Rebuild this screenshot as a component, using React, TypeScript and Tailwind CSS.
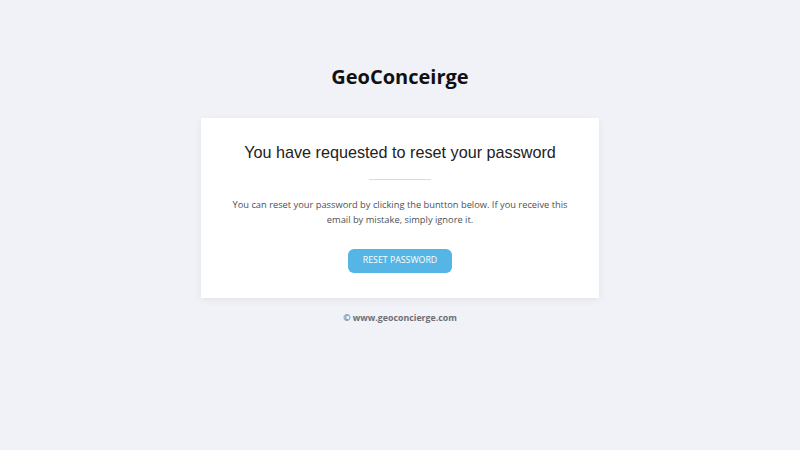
export default function App() {
  return (
    <div className="min-h-screen w-full bg-[#f0f2f8] flex flex-col items-center pt-[62px] font-['Open_Sans',sans-serif]">
      {/* Brand */}
      <h1 className="text-[20px] leading-[30px] font-bold text-[#111111]">GeoConceirge</h1>

      {/* Card */}
      <div className="mt-[26px] w-[398px] h-[180px] bg-white shadow-[0_2px_8px_rgba(0,0,0,0.06)] flex flex-col items-center pt-[23px]">
        <h2 className="font-['Liberation_Sans',Arial,sans-serif] text-[16.2px] leading-[22px] text-[#222222]">
          You have requested to reset your password
        </h2>
        <div className="mt-[16px] h-px w-[62px] bg-[#d9dbe0]" />
        <p className="mt-[17px] w-[350px] text-center text-[9.3px] leading-[15px] text-[#4c5157]">
          You can reset your password by clicking the buntton below. If you receive this email by mistake, simply ignore it.
        </p>
        <button className="mt-[22px] w-[104px] h-[24px] rounded-[6px] bg-[#55b5e5] text-white text-[8.8px] uppercase">
          Reset Password
        </button>
      </div>

      {/* Footer */}
      <p className="mt-[13px] text-[8.8px] leading-[14px] font-bold text-[#6b7078]">© www.geoconcierge.com</p>
    </div>
  );
}
